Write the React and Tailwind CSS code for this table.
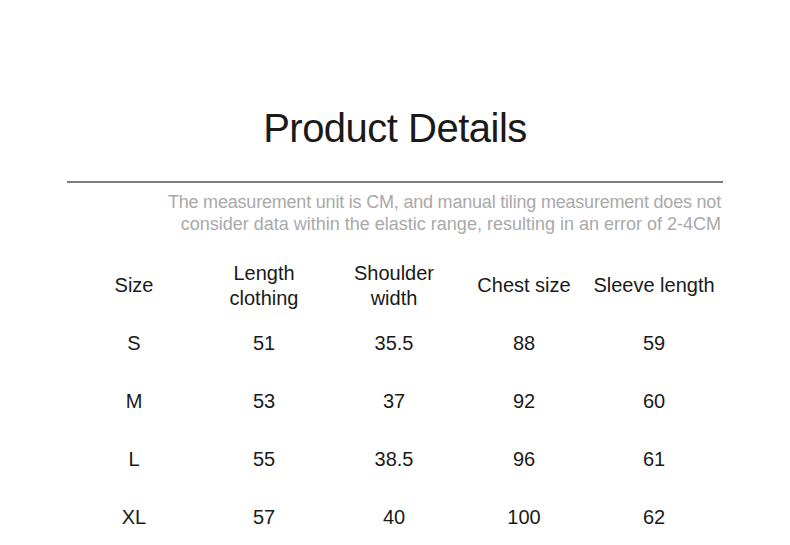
import React from 'react';

const headers = [
  ['Size'],
  ['Length', 'clothing'],
  ['Shoulder', 'width'],
  ['Chest size'],
  ['Sleeve length'],
];

const rows = [
  ['S', '51', '35.5', '88', '59'],
  ['M', '53', '37', '92', '60'],
  ['L', '55', '38.5', '96', '61'],
  ['XL', '57', '40', '100', '62'],
];

export default function App() {
  return (
    <div className="w-[790px] h-[545px] bg-white text-[#1a1a1a] overflow-hidden" style={{ fontFamily: '"Liberation Sans", Arial, sans-serif' }}>
      <div className="flex flex-col items-center pt-[103px]">
        <h1 className="text-[40px] leading-[50px] tracking-[-0.5px] font-normal">Product Details</h1>
      </div>

      <div className="mx-[67px] mt-[28px] h-[2px] bg-[#7d7d7d]" />

      <div className="mx-[69px] mt-[8px] text-right text-[18px] leading-[22px] tracking-[-0.2px] text-[#a9a9a9]">
        <p>The measurement unit is CM, and manual tiling measurement does not</p>
        <p className="tracking-normal">consider data within the elastic range, resulting in an error of 2-4CM</p>
      </div>

      {/* Table */}
      <div className="mx-[69px] mt-[22px] w-[650px]">
        <div className="grid grid-cols-5 h-[57px] items-center">
          {headers.map((h, i) => (
            <div key={i} className="text-center text-[20px] leading-[25px]">
              {h.map((line, j) => (
                <div key={j}>{line}</div>
              ))}
            </div>
          ))}
        </div>
        {rows.map((r, i) => (
          <div key={i} className="grid grid-cols-5 h-[58px] items-center">
            {r.map((c, j) => (
              <div key={j} className="text-center text-[20px]">{c}</div>
            ))}
          </div>
        ))}
      </div>
    </div>
  );
}
